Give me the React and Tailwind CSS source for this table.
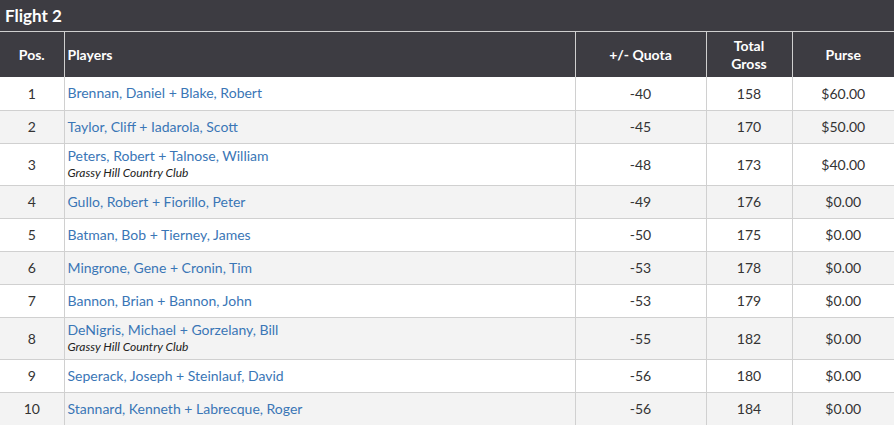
const rows = [
  { pos: 1, players: "Brennan, Daniel + Blake, Robert", quota: -40, gross: 158, purse: "$60.00" },
  { pos: 2, players: "Taylor, Cliff + Iadarola, Scott", quota: -45, gross: 170, purse: "$50.00" },
  { pos: 3, players: "Peters, Robert + Talnose, William", club: "Grassy Hill Country Club", quota: -48, gross: 173, purse: "$40.00" },
  { pos: 4, players: "Gullo, Robert + Fiorillo, Peter", quota: -49, gross: 176, purse: "$0.00" },
  { pos: 5, players: "Batman, Bob + Tierney, James", quota: -50, gross: 175, purse: "$0.00" },
  { pos: 6, players: "Mingrone, Gene + Cronin, Tim", quota: -53, gross: 178, purse: "$0.00" },
  { pos: 7, players: "Bannon, Brian + Bannon, John", quota: -53, gross: 179, purse: "$0.00" },
  { pos: 8, players: "DeNigris, Michael + Gorzelany, Bill", club: "Grassy Hill Country Club", quota: -55, gross: 182, purse: "$0.00" },
  { pos: 9, players: "Seperack, Joseph + Steinlauf, David", quota: -56, gross: 180, purse: "$0.00" },
  { pos: 10, players: "Stannard, Kenneth + Labrecque, Roger", quota: -56, gross: 184, purse: "$0.00" },
];

const App = () => {
  return (
    <div className="w-[894px] h-[425px] overflow-hidden bg-white font-['Lato',sans-serif] text-[14px] text-[#333]">
      <div className="h-[32px] bg-[#3d3c42] px-[5px] flex items-center text-white font-bold text-[17px] border-b border-[#cfcfcf]">
        Flight 2
      </div>
      <table className="w-full border-collapse table-fixed">
        <colgroup>
          <col className="w-[64px]" />
          <col className="w-[511px]" />
          <col className="w-[131px]" />
          <col className="w-[86px]" />
          <col className="w-[102px]" />
        </colgroup>
        <thead>
          <tr className="h-[45px] bg-[#3d3c42] text-white font-bold leading-[18px]">
            <th className="text-center border-r border-[#cfcfcf]">Pos.</th>
            <th className="text-left pl-[3px] border-r border-[#cfcfcf]">Players</th>
            <th className="text-center border-r border-[#cfcfcf]">+/- Quota</th>
            <th className="text-center border-r border-[#cfcfcf]">
              Total
              <br />
              Gross
            </th>
            <th className="text-center">Purse</th>
          </tr>
        </thead>
        <tbody>
          {rows.map((row, i) => (
            <tr
              key={row.pos}
              className={`${row.club ? "h-[42px]" : "h-[33px]"} ${i % 2 === 1 ? "bg-[#f3f3f3]" : "bg-white"} border-b border-[#d0d0d0]`}
            >
              <td className="text-center border-r border-[#d0d0d0]">{row.pos}</td>
              <td className="pl-[3px] border-r border-[#d0d0d0]">
                <div className="text-[#3a76b6] leading-[16px]">{row.players}</div>
                {row.club && (
                  <div className="italic text-[12px] text-[#222] leading-[14px] mt-[2px]">{row.club}</div>
                )}
              </td>
              <td className="text-center border-r border-[#d0d0d0]">{row.quota}</td>
              <td className="text-center border-r border-[#d0d0d0]">{row.gross}</td>
              <td className="text-center">{row.purse}</td>
            </tr>
          ))}
        </tbody>
      </table>
    </div>
  );
};

export default App;
